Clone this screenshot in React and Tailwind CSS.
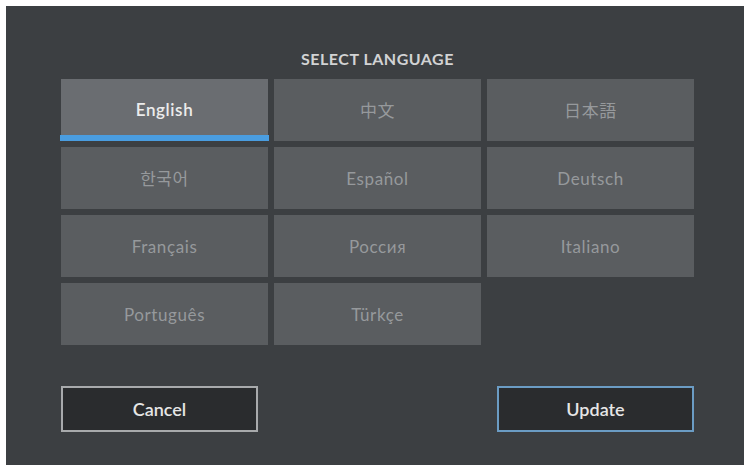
import React, { useState } from 'react';

const LANGUAGES = [
  'English', '中文', '日本語',
  '한국어', 'Español', 'Deutsch',
  'Français', 'Россия', 'Italiano',
  'Português', 'Türkçe',
];

const FONT = { fontFamily: 'Lato, "Noto Sans CJK JP", "Noto Sans CJK KR", sans-serif' };

function LanguageTile({ label, active, onClick }) {
  return (
    <button
      onClick={onClick}
      className={`relative h-[62px] flex items-center justify-center text-[17px] tracking-[0.6px] ${active ? 'bg-[#6a6d71] text-[#ececec] font-semibold' : 'bg-[#5a5d60] text-[#96999c]'}`}
    >
      <span className={active ? '-mt-px' : 'mt-px'}>{label}</span>
      {active && <span className="absolute -left-px -right-px bottom-0 h-[6px] bg-[#4a9de0]" />}
    </button>
  );
}

export default function App() {
  const [lang, setLang] = useState('English');

  return (
    <div className="w-[748px] h-[470px] bg-white p-[6px] pr-[4px] pb-[5px]" style={FONT}>
      <div className="h-full bg-[#3c3f42] flex flex-col px-[55px] pr-[50px]">
        <div className="pt-[41px] pb-[8px] text-center text-[16px] leading-[24px] font-bold tracking-[0.5px] text-[#d2d3d4]">
          SELECT LANGUAGE
        </div>

        <div className="grid grid-cols-3 gap-x-[6px] gap-y-[6px]">
          {LANGUAGES.map(l => (
            <LanguageTile key={l} label={l} active={lang === l} onClick={() => setLang(l)} />
          ))}
        </div>

        <div className="mt-[41px] flex justify-between">
          <button className="w-[197px] h-[46px] bg-[#2a2c2e] border-2 border-[#a8aaac] text-[#e6e6e6] text-[18px] font-semibold">
            Cancel
          </button>
          <button className="w-[197px] h-[46px] bg-[#2a2c2e] border-2 border-[#6b9cc4] text-[#e6e6e6] text-[18px] font-semibold">
            Update
          </button>
        </div>
      </div>
    </div>
  );
}
